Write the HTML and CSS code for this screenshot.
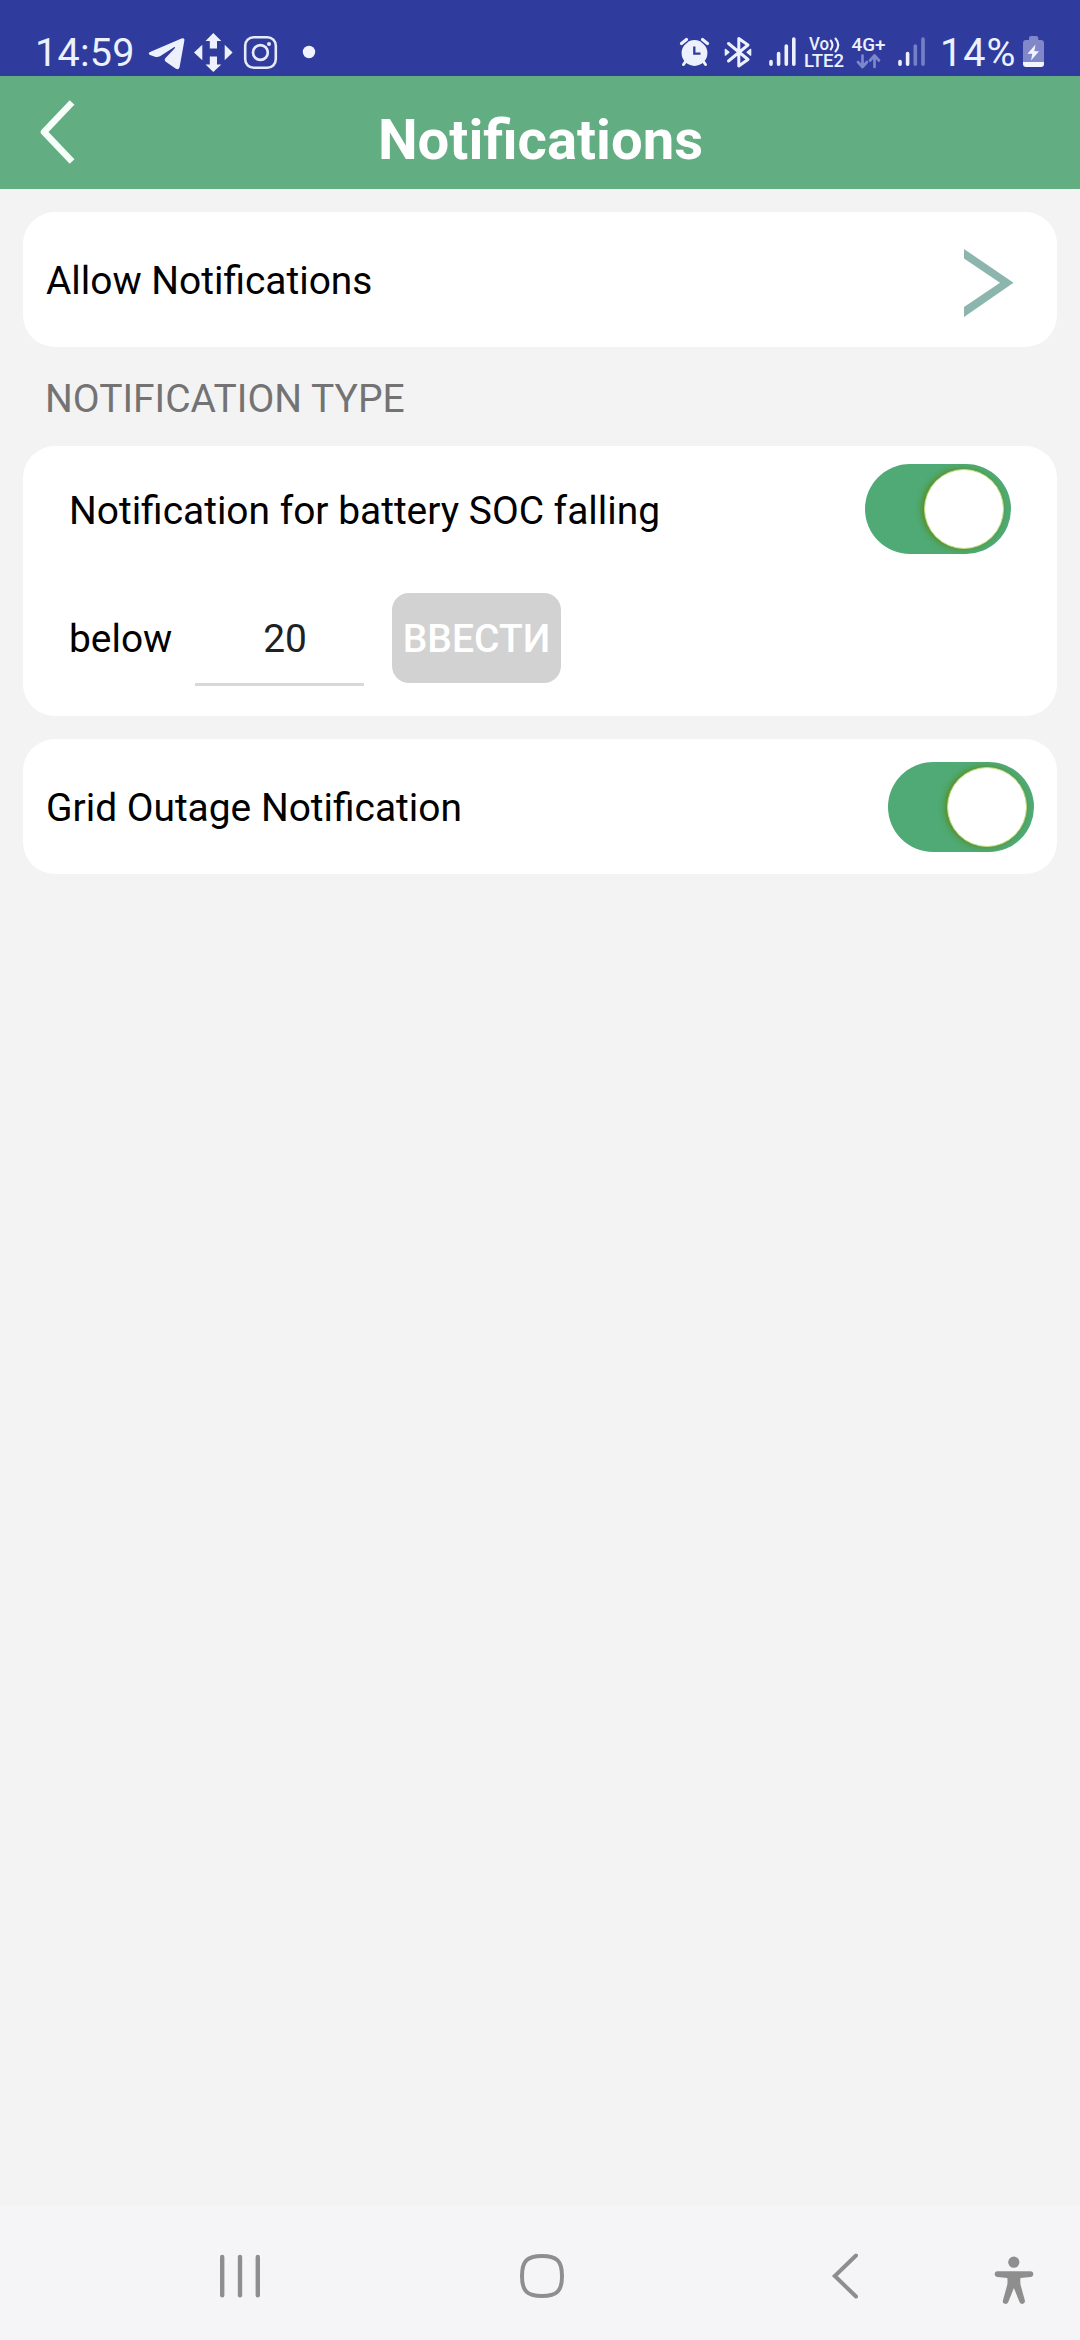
FILE: index.html
```html
<!DOCTYPE html>
<html lang="en">
<head>
  <meta charset="UTF-8">
  <meta name="viewport" content="width=device-width, initial-scale=1.0">
  <title>Notifications</title>
  <link rel="stylesheet" href="styles.css">
</head>
<body>
  <div class="status-bar">
    <div class="status-left">
      <span class="clock">14:59</span>
      <svg class="icon-telegram" width="40" height="44" viewBox="146 30 40 44">
        <path fill="#edf1fd" d="M150 52 L181.5 38.5 Q185 37.5 184.3 41 L179.5 67.5 Q178.5 70.5 175.5 68.5 L165.5 61.5 Q163.8 60 165.3 58.3 L175 48 Q175.6 46.5 174 47.2 L160 56.3 Q157.5 57.5 155 56.8 L150 55 Q147.5 53.6 150 52Z"/>
      </svg>
      <svg class="icon-move" width="44" height="44" viewBox="192 30 44 44">
        <path fill="#edf1fd" d="M213.3 33 L221.3 41 H217 V48.5 H209.8 V41 H205.5Z M213.3 72 L205.5 64.5 H209.8 V56.5 H217 V64.5 H221.3Z M194 52.5 L202.3 44.7 V60.3Z M232.6 52.5 L224.7 44.7 V60.3Z"/>
      </svg>
      <svg class="icon-instagram" width="40" height="44" viewBox="240 30 40 44">
        <rect x="245.2" y="37.2" width="30.6" height="30.6" rx="8.5" fill="none" stroke="#e6eafb" stroke-width="2.6"/>
        <circle cx="260.4" cy="52.5" r="7.4" fill="none" stroke="#e6eafb" stroke-width="2.7"/>
        <circle cx="269" cy="44" r="2" fill="#e6eafb"/>
      </svg>
      <svg class="icon-dot" width="18" height="44" viewBox="300 30 18 44">
        <circle cx="309" cy="52" r="6.2" fill="#f1f4fe"/>
      </svg>
    </div>
    <div class="status-right">
      <svg width="36" height="44" viewBox="677 30 36 44">
        <circle cx="694.5" cy="53" r="12.9" fill="#edf1fd"/>
        <path d="M681.5 43.5 L686.5 39.5 M702.5 39.5 L707.5 43.5" stroke="#2f3c9e" stroke-width="6"/>
        <path d="M681.5 43.5 L686.5 39.5 M702.5 39.5 L707.5 43.5" stroke="#edf1fd" stroke-width="3.2" stroke-linecap="round"/>
        <path d="M686 61 L683.5 64.5 M703 61 L705.5 64.5" stroke="#edf1fd" stroke-width="3" stroke-linecap="round"/>
        <path d="M694.3 46.5 V53.7 H700.5" fill="none" stroke="#2f3c9e" stroke-width="2.3"/>
      </svg>
      <svg width="34" height="44" viewBox="723 30 34 44" class="icon-bluetooth">
        <path d="M728.5 43.5 L748 59.5 L738.8 66 V38.5 L748 45 L728.5 61" fill="none" stroke="#edf1fd" stroke-width="3" stroke-linecap="round" stroke-linejoin="round"/>
        <path d="M725.3 49.3 L729 52.2 L725.3 55.2Z M750.7 49.3 L747 52.2 L750.7 55.2Z" fill="#edf1fd" stroke="#edf1fd" stroke-width="1.2" stroke-linejoin="round"/>
      </svg>
      <svg class="icon-signal" width="34" height="44" viewBox="765 30 34 44">
        <path d="M771 61.5 V64.2 M778.6 53.5 V64.2 M786.3 46 V64.2 M793.8 39 V64.2" stroke="#edf1fd" stroke-width="3.6" stroke-linecap="round"/>
      </svg>
      <svg class="icon-lte" width="44" height="44" viewBox="802 30 44 44">
        <text x="809" y="50" class="tiny" textLength="20" lengthAdjust="spacingAndGlyphs">Vo</text>
        <path d="M830.7 40.5 Q834.2 45 830.7 49.5 M835.5 38.5 Q841 45 835.5 51.5" fill="none" stroke="#edf1fd" stroke-width="2.1" stroke-linecap="round"/>
        <text x="804" y="66.7" class="tiny" textLength="40" lengthAdjust="spacingAndGlyphs">LTE2</text>
      </svg>
      <svg class="icon-4g" width="40" height="44" viewBox="849 30 40 44">
        <text x="851.5" y="50.5" class="tiny" textLength="34" lengthAdjust="spacingAndGlyphs">4G+</text>
        <path d="M862.5 55.5 V66.5 M858 62 L862.5 67 L867 62 M874.5 67 V56 M870 60.5 L874.5 55.5 L879 60.5" fill="none" stroke="#7d87c9" stroke-width="2.7" stroke-linecap="round" stroke-linejoin="round"/>
      </svg>
      <svg class="icon-signal2" width="34" height="44" viewBox="894 30 34 44">
        <path d="M900 61.5 V64.2 M907.6 53.5 V64.2" stroke="#edf1fd" stroke-width="3.6" stroke-linecap="round"/>
        <path d="M915.3 46 V64.2 M923 39 V64.2" stroke="#7480c6" stroke-width="3.6" stroke-linecap="round"/>
      </svg>
      <span class="battery-text">14%</span>
      <svg width="26" height="44" viewBox="1020 30 26 44">
        <path d="M1029 40 V38 Q1029 36 1031 36 H1036 Q1038.3 36 1038.3 38 V40 H1041 Q1044 40 1044 43 V62 H1023 V43 Q1023 40 1026 40Z" fill="#8088ca"/>
        <path d="M1023 62 H1044 V64 Q1044 67 1041 67 H1026 Q1023 67 1023 64Z" fill="#f3f5fe"/>
        <path d="M1035.5 44.5 L1027.5 53.8 H1032.3 L1031 60.5 L1039 51.2 H1034.3Z" fill="#f3f5fe"/>
      </svg>
    </div>
  </div>

  <header class="header">
    <svg class="back" width="40" height="68" viewBox="38 98 40 68">
      <path d="M69.8 104.8 L44 132 L69.8 159.2" fill="none" stroke="#f6fff9" stroke-width="6.6" stroke-linecap="square" stroke-linejoin="round"/>
    </svg>
    <h1>Notifications</h1>
  </header>

  <main class="content">
    <div class="card row">
      <span class="label">Allow Notifications</span>
      <svg class="arrow" width="50" height="68" viewBox="0 0 50 68">
        <path d="M0 0 L49.5 33.7 L0 68 V58 L36 33.7 L0 9.5Z" fill="#8cb5ae"/>
      </svg>
    </div>

    <h2>NOTIFICATION TYPE</h2>

    <div class="card soc">
      <div class="soc-row">
        <span class="label">Notification for battery SOC falling</span>
        <div class="toggle"><div class="knob"></div></div>
      </div>
      <div class="soc-row soc-value">
        <span class="below">below</span>
        <div class="input">20</div>
        <button class="enter">ВВЕСТИ</button>
      </div>
    </div>

    <div class="card row">
      <span class="label">Grid Outage Notification</span>
      <div class="toggle"><div class="knob"></div></div>
    </div>
  </main>

  <nav class="nav-bar">
    <svg class="nav-recent" width="48" height="48" viewBox="216 2252 48 48">
      <path d="M222.2 2257 V2295.3 M240 2257 V2295.3 M257.8 2257 V2295.3" stroke="#8e8e8e" stroke-width="4.4" stroke-linecap="round"/>
    </svg>
    <svg class="nav-home" width="48" height="48" viewBox="518 2252 48 48">
      <path d="M542 2256 C557 2256 562 2261 562 2276 C562 2291 557 2296 542 2296 C527 2296 522 2291 522 2276 C522 2261 527 2256 542 2256Z" fill="none" stroke="#8e8e8e" stroke-width="4"/>
    </svg>
    <svg class="nav-back" width="30" height="48" viewBox="830 2252 30 48">
      <path d="M856 2255.5 L834.8 2276 L856 2296.5" fill="none" stroke="#8e8e8e" stroke-width="4" stroke-linecap="round"/>
    </svg>
    <svg class="nav-access" width="42" height="50" viewBox="993 2254 42 50">
      <circle cx="1013.8" cy="2262.2" r="5.6" fill="#8e8e8e"/>
      <path d="M997.5 2271.2 H1030.5 Q1033.3 2271.5 1033.3 2274 Q1033.3 2276.5 1030.5 2277 L1020.5 2278 Q1020 2282 1020.6 2285 L1024.9 2300.5 Q1025.3 2303 1023 2303.8 Q1020.5 2304.3 1019.5 2302 L1013.9 2288 L1008.3 2302 Q1007.2 2304.3 1004.8 2303.8 Q1002.3 2303 1002.9 2300.5 L1007.2 2285 Q1007.8 2282 1007.3 2278 L997.5 2277 Q994.7 2276.5 994.7 2274 Q994.7 2271.5 997.5 2271.2Z" fill="#8e8e8e"/>
    </svg>
  </nav>
</body>
</html>
```
FILE: styles.css
```css
* {
  box-sizing: border-box;
}

body {
  margin: 0;
  height: 2340px;
  display: flex;
  flex-direction: column;
  background-color: #f3f3f3;
  font-family: Roboto, sans-serif;
  font-size: 38.9px;
  line-height: 46px;
  color: #000;
}

svg {
  display: block;
  flex: none;
}

/* status bar */
.status-bar {
  height: 76px;
  padding: 30px 34px 0 35px;
  display: flex;
  justify-content: space-between;
  background-color: #2f3c9e;
  color: #edf1fd;
  font-size: 39.5px;
}

.status-left,
.status-right {
  display: flex;
}

.clock {
  width: 111px;
  letter-spacing: 0.3px;
}

.icon-move {
  margin-left: 6px;
}

.icon-instagram {
  margin-left: 4px;
}

.icon-dot {
  margin-left: 20px;
}

.icon-bluetooth {
  margin-left: 10px;
}

.icon-signal {
  margin-left: 8px;
}

.icon-lte,
.icon-4g {
  margin-left: 3px;
}

.icon-signal2 {
  margin-left: 5px;
}

.tiny {
  font-size: 17.5px;
  font-weight: 500;
  fill: #edf1fd;
}

.battery-text {
  width: 80px;
  margin-left: 12px;
  letter-spacing: 1px;
}

/* header */
.header {
  height: 113px;
  padding: 22px 38px 0;
  display: flex;
  background-color: #62ad81;
}

.header h1 {
  flex: 1;
  margin: 9px 39px 0 0;
  font-size: 56.25px;
  line-height: 66px;
  font-weight: bold;
  text-align: center;
  color: #fff;
}

.content {
  flex: 1;
  padding: 23px 23px 0;
}

.card {
  background-color: #fff;
  border-radius: 32px;
}

.row {
  height: 135px;
  padding: 0 23px;
  display: flex;
  align-items: center;
  justify-content: space-between;
}

.label {
  padding-top: 3px;
}

.arrow {
  margin: 6px 20px 0 0;
}

h2 {
  margin: 0;
  height: 99px;
  padding: 29px 0 0 22px;
  font-size: 39px;
  line-height: 46px;
  font-weight: normal;
  color: #737373;
}

.soc {
  height: 270px;
  margin-bottom: 23px;
  padding: 18px 46px 0 46px;
}

.soc-row {
  height: 90px;
  display: flex;
  align-items: center;
  justify-content: space-between;
}

.soc-value {
  height: 93px;
  margin-top: 39px;
  align-items: flex-start;
  justify-content: flex-start;
}

.below {
  width: 126px;
  padding-top: 23px;
}

.input {
  width: 169px;
  height: 93px;
  padding: 23px 0 0 11px;
  margin-right: 28px;
  text-align: center;
  color: #212121;
  border-bottom: 3px solid #d8d8d8;
}

.enter {
  width: 169px;
  height: 90px;
  padding: 2px 0 0;
  border: none;
  border-radius: 17px;
  background-color: #d2d2d2;
  color: #fff;
  font-family: Roboto, sans-serif;
  font-size: 39px;
  font-weight: 500;
}

/* switches */
.toggle {
  width: 146px;
  height: 90px;
  padding: 5px 7px 0 0;
  display: flex;
  justify-content: flex-end;
  border-radius: 45px;
  background-color: #4faa75;
}

.knob {
  width: 80px;
  height: 80px;
  border: 1px solid #c5dc7c;
  border-radius: 50%;
  background-color: #fff;
  box-shadow: -2px 0 6px rgba(90, 130, 0, 0.8);
}

/* navigation bar */
.nav-bar {
  height: 135px;
  padding: 47px 45px 0 216px;
  display: flex;
  background-color: #f5f5f7;
}

.nav-home {
  margin-left: 254px;
}

.nav-back {
  margin-left: 264px;
}

.nav-access {
  margin: 2px 0 0 133px;
}
```
